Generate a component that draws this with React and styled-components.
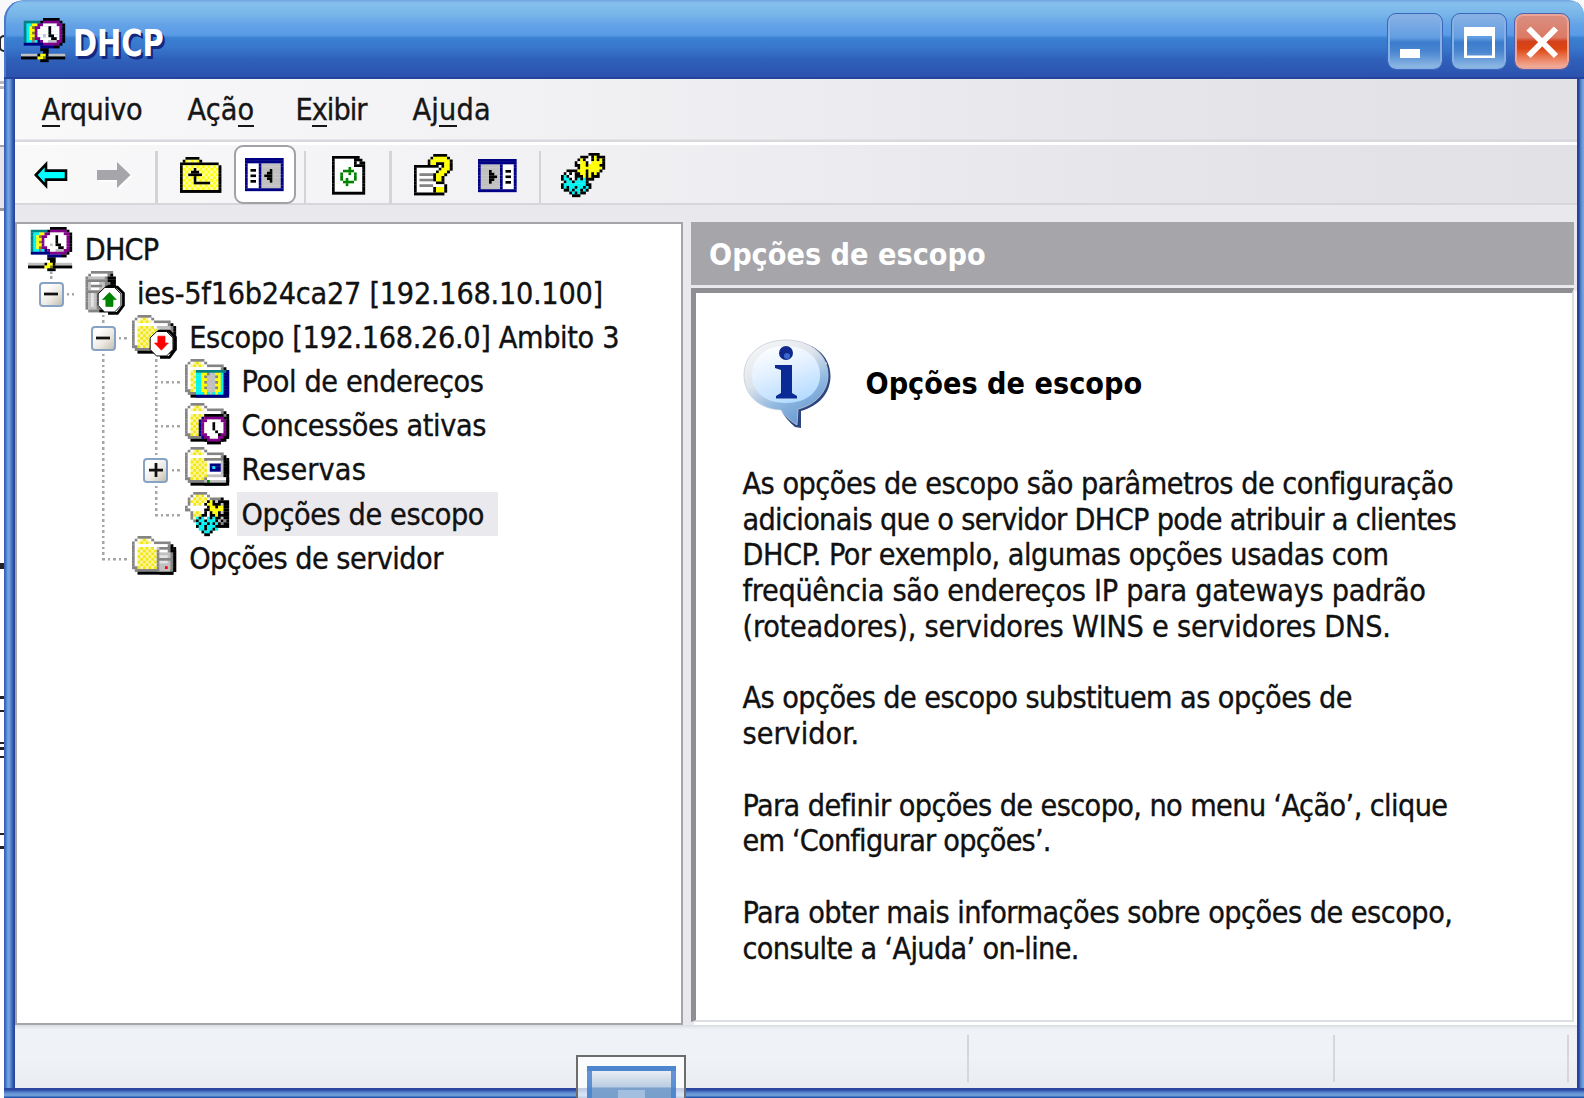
import React from "react";
import styled, { createGlobalStyle, css } from "styled-components";

const UI_FONT = `"DejaVu Sans Condensed", "DejaVu Sans", "Noto Sans", sans-serif`;

const GlobalStyle = createGlobalStyle`
  *, *::before, *::after { box-sizing: border-box; }
  body { margin: 0; background: #fff; overflow: hidden; }
`;

/* ---------- pixel icons ---------- */

const PALETTE = {
  K: "#000000", W: "#ffffff", Y: "#ffff00", C: "#00f4f4", T: "#008080", N: "#000084",
  P: "#84008c", G: "#c0c0c0", L: "#e4e4e4", D: "#848484", B: "#0000ff", g: "#008400", R: "#ff0000",
  o: "#848400",
};

const colorAt = (ch, x, y) => {
  if (ch === "y") return (x + y) % 2 ? "#f0e80c" : "#fbf49c";
  if (ch === "h") return (x + y) % 2 ? "#ffff00" : "#ffff9c";
  return PALETTE[ch];
};

const IconSvg = styled.svg`
  display: block;
  flex: none;
  overflow: visible;
  width: ${(p) => p.$w}px;
  height: ${(p) => p.$h}px;
`;

function PixelIcon({ layers, children }) {
  const w = layers[0][0].length;
  const h = layers[0].length;
  const rects = [];
  layers.forEach((rows, li) =>
    rows.forEach((row, y) => {
      let x = 0;
      while (x < row.length) {
        const color = colorAt(row[x], x, y);
        let end = x + 1;
        while (end < row.length && colorAt(row[end], end, y) === color) end += 1;
        if (color)
          rects.push(<rect key={`${li}-${x}-${y}`} x={x} y={y} width={end - x + 0.06} height={1.06} fill={color} />);
        x = end;
      }
    })
  );
  return (
    <IconSvg $w={w * 2.75} $h={h * 2.75} viewBox={`0 0 ${w} ${h}`} aria-hidden="true">
      {rects}
      {children}
    </IconSvg>
  );
}

const DHCP = [
  "........KKKKKK..",
  ".TTTTTTKPPPPPPK.",
  ".TCCYYPPWWWWWPPK",
  ".TCYoPPWWWKWWWPK",
  ".TCYYPWWWWKWWWPK",
  ".TCYoPWWWWKWWWPK",
  ".TCYYPWWGWKKWWPK",
  ".TCYoPPWWWWKKWPK",
  ".TCCDCNPWWGGGPPK",
  ".NNNNNNNPPPPPPK.",
  ".......NNNNNKK..",
  ".......KKK......",
  "........KK......",
  "GGGGGGKYYKGGGGGG",
  "KKKKKKYYoKKKKKKK",
  ".......KKK......",
];

const SERVER = [
  "....DDDDDDDD....",
  "...DWWWWWWDK....",
  "..DGGGGGGDKKK...",
  "..DDDDDDDDKKK...",
  "..DGWWWGGDDKK...",
  "..DGDDDDGDKKK...",
  "..DGWWWGGD......",
  "..DDDDDDD.......",
  "..DGLGD.........",
  "..DGLGD.........",
  "..DGLGD.........",
  "..DGLGD.........",
  "..DGLGD.........",
  "..DGGGDD........",
  "...DDDDKK.......",
  "................",
];

const FOLDER = [
  "..DDDDD.........",
  ".DWyyyWD........",
  "DWyyyyyWDDDDDD..",
  "DWWWWWWWWWWWWDK.",
  "DWyyyyyyWGGGGGDK",
  "DWyyyyyyyWGGGGDK",
  "DWyyyyyyyWGGGGDK",
  "DWyyyyyyyWGGGGDK",
  "DWyyyyyyyWGGGGDK",
  "DWyyyyyyyWGGGGDK",
  "DWyyyyyyyWGGGGDK",
  "DDyyyyyyyWGGGGDK",
  ".DDDDDDDDDDDDDKK",
  "..KKKKKKKKKKKKK.",
  "................",
  "................",
];

const CLEAR_LOWER = "................";
const pad = (n, rows) => [...Array(n).fill(CLEAR_LOWER), ...rows];

const POOL = pad(4, [
  "....TTTTTTTTTTTN",
  "....CCYYDGGYYCNN",
  "....CCYDGGGDYCNN",
  "....CCYYGGGYYCNN",
  "....CCYDGGGDYCNN",
  "....CCYYGGGYYCNN",
  "....CCYDGGGDYCNN",
  "....CCYYGGGYYCNN",
  "....CCCYCGCYCCNN",
  "....NNNNNNNNNNNN",
]);

const CLOCK = pad(4, [
  ".......KKKKKKK..",
  "......NPPPPPPPK.",
  ".....NPPWWWWWPPK",
  ".....NPWWWKWWWPK",
  ".....NPWWWKWWWPK",
  ".....NPWWWKWWWPK",
  ".....NPWWWWKWWPK",
  ".....NPPWWWWKPPK",
  "......NPPWWWPPK.",
  ".......KPPPPPK..",
  "........KKKKK...",
]);

const COMPUTER = pad(4, [
  ".......DDDDDDDK.",
  "........WWWWWGKK",
  "........WNNNNGKK",
  "........WNCNNGKK",
  "........WNNNNGKK",
  "........WWWWWGKK",
  "........GGGGGGK.",
  ".......DWWWWWWWK",
  ".......GgGGGGGGK",
  ".......KKKKKKKKK",
]);

const SMALL_SERVER = pad(4, [
  "..........DDDDK.",
  ".........DWWWDKK",
  ".........DGGGGDK",
  ".........DLLLGDK",
  ".........DDDDDDK",
  ".........DLLLGDK",
  ".........DGGGGDK",
  ".........DGGRGDK",
  ".........DGGGGDK",
  "..........KKKKK.",
]);

const OPEN_OPTIONS = [
  "...DDDDD........",
  "..DWyyyWD.......",
  ".DWyyyyyWDDDDK..",
  ".DyyyyyyKYKGKKKK",
  ".DWyyyWKYYKKKGKK",
  "DWWWWWWWKYYKYYKK",
  "DDWWWWWKKYYYYYKK",
  "..DyyyWKWKYYKGKK",
  "..DyyyKKWKKYKKKK",
  "..DyCKCWCKCKKGKK",
  "...DKCCKCCCKGKDK",
  "....CKCCKCKCKDKK",
  "....KCCKCCCKKKKK",
  ".....CCKCCKC....",
  "......KCCK......",
  ".......KK.......",
];

const FOLDER_UP = [
  "..KKKKK........",
  ".KhhhhhK.......",
  "KKKKKKKKKKKKKK.",
  "KhhhhhhhhhhhhhK",
  "KhhhhKhhhhhhhhK",
  "KhhhKKKhhhhhhhK",
  "KhhKKKKKhhhhhhK",
  "KhhhhKhhhhhhhhK",
  "KhhhhKhhhhhhhhK",
  "KhhhhKKKKKKhhhK",
  "KhhhhhhhhhhhhhK",
  "KhhhhhhhhhhhhhK",
  "KKKKKKKKKKKKKKK",
];

const TREE_PANEL = [
  "NNNNNNNNNNNNNN",
  "NNNNNNNNNNNNNN",
  "NWWWWNGGGGGGGN",
  "NWWWWNGGGGGGGN",
  "NWKKWNGGGKGGGN",
  "NWWWWNGGKKGGGN",
  "NWKKWNGKKKGGGN",
  "NWWWWNGGKKGGGN",
  "NWKKWNGGGKGGGN",
  "NWWWWNGGGGGGGN",
  "NWWWWNGGGGGGGN",
  "NNNNNNNNNNNNNN",
];

const TASK_PANEL = TREE_PANEL.map((row) => row.split("").reverse().join(""));

const REFRESH = [
  "KKKKKKKKKK..",
  "KWWWWWWWKKK.",
  "KWWWWWWWKWKK",
  "KWWWWWWWKKKK",
  "KWWWWWgWWWWK",
  "KWWWggggWWWK",
  "KWWgWWgWgWWK",
  "KWWgWWWWgWWK",
  "KWWgWgWWgWWK",
  "KWWWggggWWWK",
  "KWWWWgWWWWWK",
  "KWWWWWWWWWWK",
  "KWWWWWWWWWWK",
  "KKKKKKKKKKKK",
];

const HELP = [
  ".......KKKKK..",
  "......KYYYYYK.",
  ".....KYYYYYYYK",
  ".....KYYKKKYYK",
  "KKKKKKKKKWKYYK",
  "KWWWWWWWWKYYYK",
  "KWWWWWWWKYYYK.",
  "KWDDDDDKYYYK..",
  "KWWWWWWKYYK...",
  "KWDDDDDKYYK...",
  "KWWWWWWWKKK...",
  "KWDDDDDWWWWK..",
  "KWWWWWWKYYYK..",
  "KWWWWWWKYYYK..",
  "KKKKKKKKKKK...",
];

const GEARS = [
  "..........KKKK..",
  ".......KKKWKYKKK",
  "......KYKWWKYKYK",
  ".....KWYYKWYYYYK",
  ".....KKYYKYYYYKK",
  "......KYYYYYYYYK",
  "..KKKKYYYKYYYYK.",
  ".KWKWKKYYKYKYK..",
  "KCKWWKKKYKYKKK..",
  "KCCKWKCKCKKK....",
  ".KCCKCCCCK......",
  "KCCCCCCCCKK.....",
  "KCKCCKCCKCK.....",
  ".KKCKCCKCK......",
  "...KCKCKK.......",
  "....KKK.........",
];

const StatusBadge = ({ color, down }) => (
  <g>
    <path d="M6.7 5.9H11L13.2 8.1V12.5L11 15.4H7.6" transform="translate(2.6 0)" fill="none" stroke="#000" strokeWidth="1" />
    <path d="M9 6h3.6l2.3 2.3v4.2L12.6 14.9H8.9L6.6 12.5V8.3z" fill="#fff" stroke="#000" strokeWidth=".35" />
    <path
      transform={down ? "translate(0 20.6) scale(1 -1)" : ""}
      d="M10.7 7.8L13.2 10.4H12V12.9H9.4V10.4H8.2z"
      fill={color}
      stroke={color}
      strokeWidth=".25"
    />
  </g>
);

const TREE_ICONS = {
  root: <PixelIcon layers={[DHCP]} />,
  server: <PixelIcon layers={[SERVER]}><StatusBadge color="#008400" /></PixelIcon>,
  scope: <PixelIcon layers={[FOLDER]}><StatusBadge color="#ff0000" down /></PixelIcon>,
  pool: <PixelIcon layers={[FOLDER, POOL]} />,
  leases: <PixelIcon layers={[FOLDER, CLOCK]} />,
  reservations: <PixelIcon layers={[FOLDER, COMPUTER]} />,
  options: <PixelIcon layers={[OPEN_OPTIONS]} />,
  serverOptions: <PixelIcon layers={[FOLDER, SMALL_SERVER]} />,
};

/* ---------- desktop and window frame ---------- */

const Desktop = styled.div`
  position: relative;
  width: 1584px;
  height: 1098px;
  overflow: hidden;
  padding-left: 4px;
  font-family: ${UI_FONT};
  color: #000;
  background: linear-gradient(to bottom,
    #f8f8fa 0 81px, #b9b9bd 81px 84px, #fff 84px 86px, #b9b9bd 86px 89px, #fff 89px 145px,
    #a0a0a4 145px 147px, #e6e5ea 147px 208px, #98989c 208px 211px, #fff 211px);
`;

const HiddenStroke = styled.i`
  position: absolute;
  left: 0;
  top: ${(p) => p.$top}px;
  width: 5px;
  height: ${(p) => p.$h || 2.75}px;
  background: #222;
`;

const HiddenBowl = styled.i`
  position: absolute;
  left: -1px;
  top: 35px;
  width: 12px;
  height: 17px;
  border: 2.75px solid #222;
  border-radius: 5px;
`;

const Frame = styled.div`
  position: relative;
  display: flex;
  flex-direction: column;
  width: 1580px;
  height: 1098px;
  border-radius: 20px 15px 0 0;
  overflow: hidden;
  background:
    linear-gradient(to bottom, #2c47a0 0 2px, #3f69bd 3px, #6d9bd6 6px, #6d9bd6 8px, #2456ad 9px) 0 1088px / 100% 10px no-repeat,
    linear-gradient(to right, #3a62bd 0 1px, #4578cb 2px, #78a9de 4px, #6896d6 6px, #4069bc 8px, #2a479f 10px, #2a479f 11px) 0 0 / 11px 100% no-repeat,
    linear-gradient(to right, #27449d 0 2px, #4470c2 3px, #6a97d5 5px, #79a9de) 100% 0 / 7px 100% no-repeat;
  padding: 0 7.5px 10px 11px;
`;

const TitleBar = styled.header`
  display: flex;
  align-items: flex-start;
  flex: none;
  height: 79px;
  margin: 0 -7.5px 0 -11px;
  padding: 14px 15px 0 16.5px;
  border-bottom: 2px solid #26439c;
  box-shadow: inset 2px 0 0 #4a78ca;
  border-radius: 20px 15px 0 0;
  background: linear-gradient(to bottom,
    #6ea3e0 0, #86c0ed 3px, #78b6e9 14px, #64a2e7 25px, #599be6 35px, #3a80d1 38px, #3876cc 48px, #2f60ba 60px, #2b52ae 77px);
`;

const TitleIcon = styled.div`
  margin-top: 4px;
`;

const TitleText = styled.h1`
  flex: 1;
  margin: 8px 0 0 8px;
  font: bold 37px/44px ${UI_FONT};
  color: #fff;
  text-shadow: 2.5px 2.5px 0 #14277e;
  transform: scaleX(0.87);
  transform-origin: left;
`;

const Captions = styled.div`
  display: flex;
  gap: 9.5px;
`;

const CaptionButton = styled.button`
  display: grid;
  place-items: center;
  width: 54px;
  height: 55px;
  padding: 0;
  border: 2px solid ${(p) => (p.$close ? "#eaa596" : "#86b1e2")};
  border-radius: 8px;
  outline: 1.5px solid ${(p) => (p.$close ? "#5560a8" : "#3a66bd")};
  outline-offset: -0.5px;
  background: ${(p) =>
    p.$close
      ? "linear-gradient(to bottom, #d98e80 0, #dc7a66 42%, #d2401c 50%, #dc4512 64%, #ea7c58 82%, #f2ad9b)"
      : "linear-gradient(to bottom, #86b0e4 0, #629ee2 42%, #3a7ccd 52%, #4a86d0 70%, #8db7e4)"};
  svg { display: block; width: 50px; height: 50px; }
`;

/* ---------- menu and toolbar ---------- */

const MenuBar = styled.nav`
  display: flex;
  flex: none;
  height: 66px;
  padding: 12px 0 0 26.5px;
  border-bottom: 3px solid #fff;
  box-shadow: inset 0 -2.5px 0 #d9d8dd;
  background: linear-gradient(to right, #f9f9fa, #f1f0f3 35%, #e4e3e8 80%, #e2e1e6);
`;

const MenuItem = styled.span`
  width: ${(p) => p.$w}px;
  font-size: 30.25px;
  line-height: 38px;
  letter-spacing: ${(p) => p.$ls}px;
  white-space: nowrap;
  color: #161616;
  -webkit-text-stroke: 0.35px #161616;
`;

const AccessKey = styled.u`
  text-decoration: none;
  display: inline-block;
  height: 36px;
  line-height: 38px;
  vertical-align: top;
  border-bottom: 2.75px solid #161616;
`;

const ToolBar = styled.div`
  display: flex;
  align-items: center;
  flex: none;
  height: 60px;
  padding-left: 19px;
  border-bottom: 2.5px solid #d7d6db;
  background: linear-gradient(to right, #f9f9fa, #f1f0f3 35%, #e4e3e8 80%, #e2e1e6);
`;

const Tool = styled.button`
  display: grid;
  flex: none;
  place-items: center;
  width: ${(p) => p.$w}px;
  height: 59px;
  padding: 0;
  margin-top: 2px;
  border: 0;
  background: none;
  ${(p) =>
    p.$pressed &&
    css`
      margin: 1px 0 0 8px;
      border: 2.75px solid #a1a1a6;
      border-radius: 9px;
      background: #fff;
    `}
`;

const Divider = styled.span`
  flex: none;
  width: 2.5px;
  height: 52px;
  margin: 5px ${(p) => p.$right}px 0 ${(p) => p.$left}px;
  background: #d4d3d8;
`;

/* ---------- body ---------- */

const Workspace = styled.main`
  display: flex;
  flex: none;
  gap: 8px;
  height: 819.5px;
  padding-top: 17px;
  background: #e9e8ed;
`;

const TreePane = styled.section`
  width: 668px;
  flex: none;
  padding: 3px 0 0 8px;
  border: 2.75px solid #a5a5a9;
  background: #fff;
`;

const TreeRow = styled.div`
  display: flex;
  height: 44.1px;
`;

const dotsV = "repeating-linear-gradient(to bottom, #a6a6a6 0 2.5px, transparent 2.5px 5.5px)";
const dotsH = "repeating-linear-gradient(to right, #a6a6a6 0 2.5px, transparent 2.5px 5.5px)";

const guideImages = {
  blank: "none",
  v: `${dotsV} 25px 0 / 2.5px 100% no-repeat`,
  tee: `${dotsV} 25px 0 / 2.5px 100% no-repeat, ${dotsH} 25px 22px / 27px 2.5px no-repeat`,
  end: `${dotsV} 25px 0 / 2.5px 23px no-repeat, ${dotsH} 25px 22px / 27px 2.5px no-repeat`,
};

const Guide = styled.span`
  display: grid;
  flex: none;
  justify-items: center;
  align-items: start;
  width: 52.25px;
  padding-top: 10.5px;
  background: ${(p) => guideImages[p.$kind]};
`;

const Expander = styled.span`
  display: grid;
  place-items: center;
  width: 25px;
  height: 25px;
  border: 2.75px solid #86a3c4;
  border-radius: 4px;
  background: linear-gradient(135deg, #fff 20%, #ece9e2 60%, #c5beb1);
  box-shadow: 0 0 0 3px #fff;
  svg { display: block; width: 14px; height: 14px; }
`;

const NodeIcon = styled.span`
  flex: none;
  width: 44px;
  margin: 0 8.5px 0 2.75px;
`;

const NodeLabel = styled.span`
  height: 44px;
  padding: 0 ${(p) => (p.$selected ? 14 : 0)}px 0 4.5px;
  font-size: 30.25px;
  line-height: 46px;
  letter-spacing: ${(p) => p.$ls}px;
  white-space: nowrap;
  color: #111;
  -webkit-text-stroke: 0.35px #111;
  background: ${(p) => (p.$selected ? "#eae9ee" : "transparent")};
`;

const DetailPane = styled.section`
  display: flex;
  flex-direction: column;
  flex: 1;
  min-width: 0;
`;

const DetailHeader = styled.h2`
  flex: none;
  height: 63px;
  margin: 0 2.75px 2.75px 0;
  padding-left: 18px;
  font: bold 30.25px/66px ${UI_FONT};
  color: #fff;
  background: #a6a5aa;
`;

const DetailBody = styled.div`
  flex: 1;
  padding: 46px 0 0 46.5px;
  border: solid;
  border-width: 5.5px 2.75px 2.75px 5.5px;
  border-color: #8e8e93 #dcdfe3 #dcdfe3 #8e8e93;
  margin: 0 3px 2.75px 0;
  background: #fff;
  box-shadow: 3px 3px 0 #fff;
`;

const InfoHeading = styled.div`
  display: flex;
  align-items: center;
  gap: 35px;
  height: 90px;
  margin-bottom: 37px;
  font: bold 30.25px/44px ${UI_FONT};
  svg { display: block; flex: none; width: 88px; height: 90px; }
`;

const Paragraph = styled.p`
  margin: 0 0 35.75px;
  font-size: 30.25px;
  line-height: 35.75px;
`;

const Line = styled.span`
  display: block;
  letter-spacing: ${(p) => p.$ls}px;
  white-space: nowrap;
  color: #111;
  -webkit-text-stroke: 0.35px #111;
`;

const StatusBar = styled.footer`
  display: flex;
  flex: 1;
  align-items: center;
  padding-right: 8px;
  box-shadow: inset 0 4px 3px -2px #d9dce1;
  background: linear-gradient(to bottom, #eff2f7 50%, #e9edf2);
`;

const StatusCell = styled.span`
  width: ${(p) => (p.$w ? `${p.$w}px` : "auto")};
  flex: ${(p) => (p.$w ? "none" : 1)};
  height: 47px;
  margin-top: 4px;
  border-right: 2.75px solid #d8d6db;
`;

const FloatingThumb = styled.div`
  position: absolute;
  left: 576px;
  top: 1055px;
  width: 110px;
  height: 80px;
  padding: 9px 8.5px 0;
  border: 2.75px solid #6c6c6c;
  background: rgba(255, 255, 255, 0.72);
`;

const ThumbWindow = styled.div`
  display: flex;
  justify-content: center;
  height: 70px;
  padding-top: 19px;
  border: 5.5px solid rgba(70, 128, 206, 0.82);
  background: linear-gradient(to bottom, #e9eef5 0, #b9cce1 16px, #7ba0cc 17px, #6f9acc 50px);
`;

const ThumbMark = styled.span`
  width: 27px;
  height: 20px;
  background: #a3bfe0;
`;

/* ---------- content ---------- */

const NODES = [
  { label: "DHCP", icon: "root", ls: -0.8, guides: [] },
  { label: "ies-5f16b24ca27 [192.168.10.100]", icon: "server", ls: -0.26, guides: ["end"], sign: "-" },
  { label: "Escopo [192.168.26.0] Ambito 3", icon: "scope", ls: -0.35, guides: ["blank", "tee"], sign: "-" },
  { label: "Pool de endereços", icon: "pool", ls: -0.38, guides: ["blank", "v", "tee"] },
  { label: "Concessões ativas", icon: "leases", ls: -0.38, guides: ["blank", "v", "tee"] },
  { label: "Reservas", icon: "reservations", ls: 0.14, guides: ["blank", "v", "tee"], sign: "+" },
  { label: "Opções de escopo", icon: "options", ls: -0.4, guides: ["blank", "v", "end"], selected: true },
  { label: "Opções de servidor", icon: "serverOptions", ls: -0.55, guides: ["blank", "end"] },
];

const TEXT = [
  [
    ["As opções de escopo são parâmetros de configuração", -0.5],
    ["adicionais que o servidor DHCP pode atribuir a clientes", -0.68],
    ["DHCP. Por exemplo, algumas opções usadas com", -0.49],
    ["freqüência são endereços IP para gateways padrão", -0.3],
    ["(roteadores), servidores WINS e servidores DNS.", -0.22],
  ],
  [
    ["As opções de escopo substituem as opções de", -0.57],
    ["servidor.", 0],
  ],
  [
    ["Para definir opções de escopo, no menu ‘Ação’, clique", -0.6],
    ["em ‘Configurar opções’.", -0.8],
  ],
  [
    ["Para obter mais informações sobre opções de escopo,", -0.51],
    ["consulte a ‘Ajuda’ on-line.", -0.66],
  ],
];

const BackArrow = () => (
  <IconSvg $w={34} $h={28} viewBox="0 0 34 28">
    <path d="M1.8 14L12 3.2V9.6H32V18.6H12V24.8z" fill="#00ffff" stroke="#000" strokeWidth="2.6" />
  </IconSvg>
);

const ForwardArrow = () => (
  <IconSvg $w={34} $h={28} viewBox="0 0 34 28">
    <path d="M2 10.5H22V2.5L35.5 15.5L22 28V20.5H2z" fill="#fff" />
    <path d="M0 9H20V1L33.5 14L20 27V19H0z" fill="#a5a5aa" />
  </IconSvg>
);

const InfoBalloon = () => (
  <svg viewBox="0 0 88 90" aria-hidden="true">
    <defs>
      <linearGradient id="rim" x1="0" y1="0" x2=".55" y2="1">
        <stop offset="0" stopColor="#fbfbfb" />
        <stop offset=".45" stopColor="#dfe4ea" />
        <stop offset=".75" stopColor="#8fb8e0" />
        <stop offset="1" stopColor="#6d9dd3" />
      </linearGradient>
      <linearGradient id="face" x1=".2" y1="0" x2=".6" y2="1">
        <stop offset="0" stopColor="#ffffff" />
        <stop offset=".45" stopColor="#e2f0ff" />
        <stop offset="1" stopColor="#b4dbff" />
      </linearGradient>
    </defs>
    <path d="M45 2C70 2 87.500 16 87.500 37C87.500 54 76 67 58 72L58 89L52 88C46 83 42 78 39 73L60 66L84 24z" fill="#2e4680" />
    <path d="M43 1C67 1 85 15 85 36C85 53 72 66 55 70L54 86C46 81 41 76 38 71C16 70 1 56 1 36C1 15 19 1 43 1z" fill="url(#rim)" stroke="#c3ced9" strokeWidth=".8" />
    <path d="M43 7C63 7 77 19 77 36C77 53 63 64 43 64C22 64 9 53 9 36C9 19 22 7 43 7z" fill="url(#face)" />
    <circle cx="43" cy="14" r="7" fill="#10288c" />
    <circle cx="44" cy="17" r="3" fill="#3a68cc" />
    <path d="M32 26H49V54L54 57V59.500H33V57L38 54V31L32 29z" fill="#0a2a96" />
  </svg>
);

export default function App() {
  return (
    <Desktop>
      <GlobalStyle />
      <HiddenBowl />
      <HiddenStroke $top={563} $h={6} />
      <HiddenStroke $top={696} />
      <HiddenStroke $top={709.5} />
      <HiddenStroke $top={741.5} />
      <HiddenStroke $top={747} />
      <HiddenStroke $top={755.5} />
      <HiddenStroke $top={832.5} />
      <HiddenStroke $top={846} />
      <Frame>
        <TitleBar>
          <TitleIcon><PixelIcon layers={[DHCP]} /></TitleIcon>
          <TitleText>DHCP</TitleText>
          <Captions>
            <CaptionButton aria-label="Minimizar">
              <svg viewBox="0 0 50 50"><rect x="10" y="32" width="20" height="9" fill="#fff" /></svg>
            </CaptionButton>
            <CaptionButton aria-label="Maximizar">
              <svg viewBox="0 0 50 50"><path fillRule="evenodd" d="M10 10H41V41H10zM13 19V38.500H38V19z" fill="#fff" /></svg>
            </CaptionButton>
            <CaptionButton $close aria-label="Fechar">
              <svg viewBox="0 0 50 50"><path d="M11.500 11.500L39 39M39 11.500L11.500 39" stroke="#fff" strokeWidth="6" /></svg>
            </CaptionButton>
          </Captions>
        </TitleBar>

        <MenuBar>
          <MenuItem $w={146} $ls={-0.5}><AccessKey>A</AccessKey>rquivo</MenuItem>
          <MenuItem $w={108} $ls={0.09}>Açã<AccessKey>o</AccessKey></MenuItem>
          <MenuItem $w={117} $ls={-1}>E<AccessKey>x</AccessKey>ibir</MenuItem>
          <MenuItem $w={100} $ls={0.2}>Aj<AccessKey>u</AccessKey>da</MenuItem>
        </MenuBar>

        <ToolBar>
          <Tool $w={34}><BackArrow /></Tool>
          <Tool $w={92}><ForwardArrow /></Tool>
          <Divider $left={-5} $right={18} />
          <Tool $w={50}><PixelIcon layers={[FOLDER_UP]} /></Tool>
          <Tool $w={62} $pressed><PixelIcon layers={[TREE_PANEL]} /></Tool>
          <Divider $left={8} $right={12} />
          <Tool $w={60}><PixelIcon layers={[REFRESH]} /></Tool>
          <Divider $left={11} $right={12} />
          <Tool $w={60}><PixelIcon layers={[HELP]} /></Tool>
          <Tool $w={67}><PixelIcon layers={[TASK_PANEL]} /></Tool>
          <Divider $left={8} $right={15} />
          <Tool $w={53}><PixelIcon layers={[GEARS]} /></Tool>
        </ToolBar>

        <Workspace>
          <TreePane>
            {NODES.map((n) => (
              <TreeRow key={n.label}>
                {n.guides.map((kind, i) => (
                  <Guide key={i} $kind={kind}>
                    {n.sign && i === n.guides.length - 1 && (
                      <Expander>
                        <svg viewBox="0 0 14 14">
                          <path d={n.sign === "+" ? "M0 7H14M7 0V14" : "M0 7H14"} stroke="#111" strokeWidth="2.75" />
                        </svg>
                      </Expander>
                    )}
                  </Guide>
                ))}
                <NodeIcon>{TREE_ICONS[n.icon]}</NodeIcon>
                <NodeLabel $ls={n.ls} $selected={n.selected}>{n.label}</NodeLabel>
              </TreeRow>
            ))}
          </TreePane>

          <DetailPane>
            <DetailHeader>Opções de escopo</DetailHeader>
            <DetailBody>
              <InfoHeading>
                <InfoBalloon />
                Opções de escopo
              </InfoHeading>
              {TEXT.map((lines, i) => (
                <Paragraph key={i}>
                  {lines.map(([text, ls]) => (
                    <Line key={text} $ls={ls}>{text}</Line>
                  ))}
                </Paragraph>
              ))}
            </DetailBody>
          </DetailPane>
        </Workspace>

        <StatusBar>
          <StatusCell />
          <StatusCell $w={365.5} />
          <StatusCell $w={234} />
        </StatusBar>
      </Frame>

      <FloatingThumb>
        <ThumbWindow><ThumbMark /></ThumbWindow>
      </FloatingThumb>
    </Desktop>
  );
}
